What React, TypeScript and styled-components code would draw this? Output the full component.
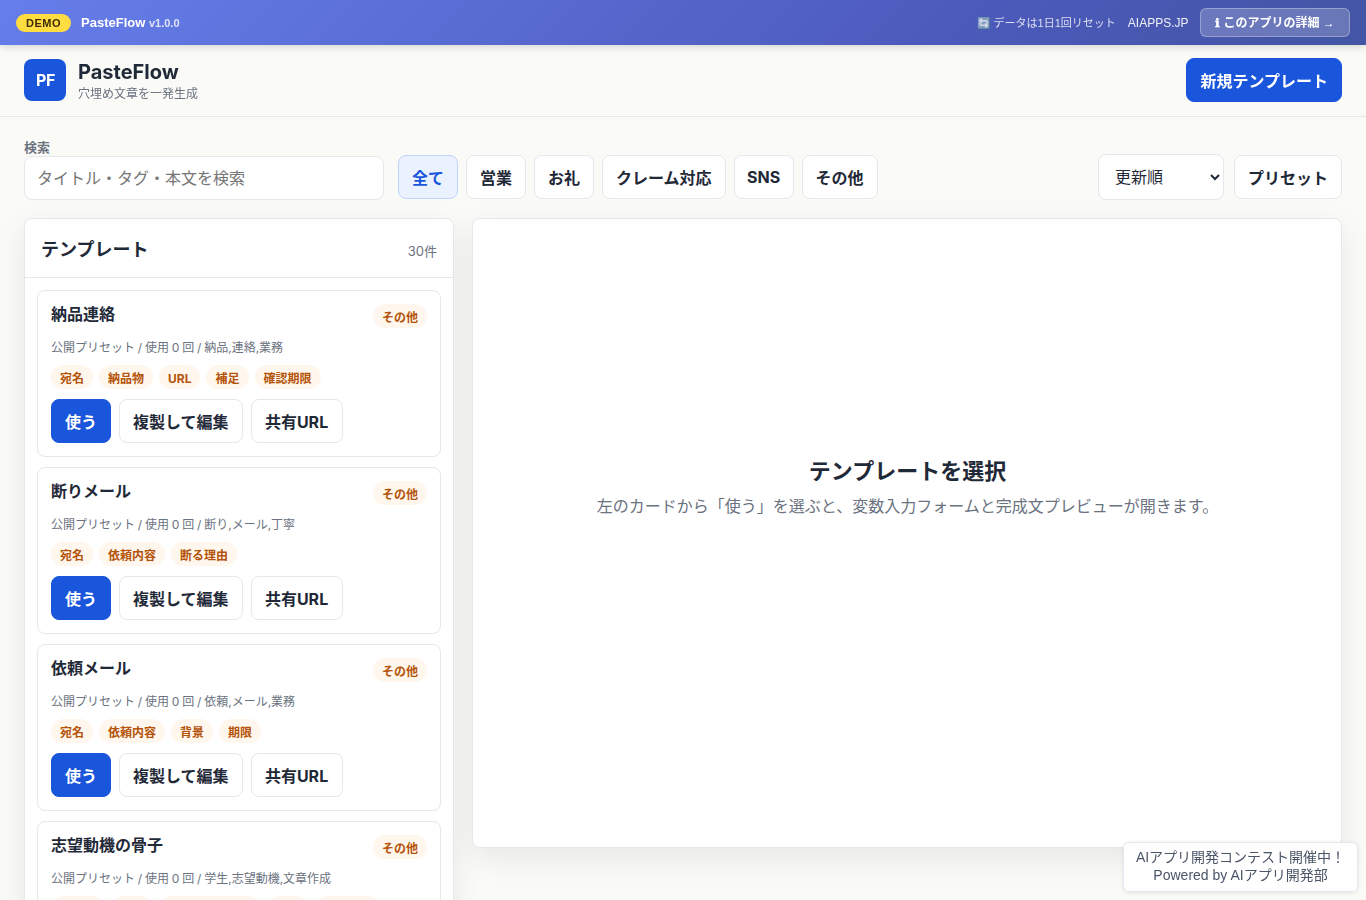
import React from 'react';
import styled, { createGlobalStyle, css } from 'styled-components';

const GlobalStyle = createGlobalStyle`
  * { box-sizing: border-box; }
  body {
    margin: 0;
    background: #fafaf7;
    color: #1f2937;
    font-family: Inter, "Noto Sans CJK JP", sans-serif;
    font-size: 16px;
  }
  h1, h2, h3, p { margin: 0; }
  button, input, select { font: inherit; color: inherit; }
`;

const Page = styled.div`
  height: 900px;
  overflow: hidden;
`;

const DemoBar = styled.div`
  position: relative;
  z-index: 3;
  display: flex;
  align-items: center;
  justify-content: space-between;
  height: 45px;
  padding: 0 16px;
  background: linear-gradient(135deg, #667eea 0%, #4c5abb 70%, #4355a4 100%);
  box-shadow: 0 2px 8px rgba(0, 0, 0, 0.15);
  color: #fff;
  font-family: "Liberation Sans", "Noto Sans CJK JP", sans-serif;
  will-change: transform;
`;

const BarGroup = styled.div<{ $gap: number }>`
  display: flex;
  align-items: center;
  gap: ${(p) => p.$gap}px;
`;

const DemoBadge = styled.span`
  padding: 3px 10px;
  border-radius: 12px;
  background: #ffdd40;
  color: #3d2b0a;
  font-size: 11px;
  font-weight: 700;
  line-height: 12px;
  letter-spacing: 0.5px;
`;

const DemoName = styled.span`
  font-size: 13px;
  font-weight: 700;
  line-height: 15px;

  small {
    font-size: 11px;
    opacity: 0.8;
  }
`;

const ResetNote = styled.span`
  margin-top: -2px;
  font-size: 11px;
  opacity: 0.8;
`;

const SiteLink = styled.span`
  margin-right: -0.5px;
  font-size: 12px;
  opacity: 0.9;
`;

const DetailLink = styled.button`
  width: 150px;
  height: 29px;
  padding: 0;
  border: 1px solid rgba(255, 255, 255, 0.3);
  border-radius: 6px;
  background: rgba(255, 255, 255, 0.2);
  font-size: 12px;
  font-weight: 700;
  line-height: 16px;
`;

const InfoMark = styled.span`
  margin-right: 0.5px;
  font-family: "DejaVu Sans", sans-serif;
  -webkit-text-stroke: 0.5px #fff;
`;

const Header = styled.header`
  position: relative;
  z-index: 2;
  display: flex;
  align-items: flex-start;
  justify-content: space-between;
  height: 72px;
  padding: 13px 24px 0;
  border-bottom: 1px solid #e5e7eb;
  will-change: transform;
`;

const Brand = styled.div`
  display: flex;
  align-items: center;
  gap: 12px;
  height: 44px;
`;

const Logo = styled.div`
  display: grid;
  place-items: center;
  width: 42px;
  height: 42px;
  padding-left: 1px;
  border-radius: 8px;
  background: #1a56db;
  color: #fff;
  font-weight: 700;
  letter-spacing: -0.3px;
`;

const BrandTitle = styled.h1`
  padding-top: 3px;
  font-size: 20px;
  line-height: 24px;
  font-weight: 700;
`;

const BrandSub = styled.p`
  padding-top: 1px;
  color: #6b7280;
  font-size: 12px;
  line-height: 18px;
`;

const Button = styled.button<{ $kind?: 'primary' | 'active'; $width?: number }>`
  width: ${(p) => (p.$width ? `${p.$width}px` : 'auto')};
  height: 44px;
  padding: 0 ${(p) => (p.$width ? 0 : 13)}px;
  border: 1px solid #e5e7eb;
  border-radius: 8px;
  background: #fff;
  font-weight: 700;
  white-space: nowrap;
  ${(p) =>
    p.$kind === 'primary' &&
    css`
      border-color: #1a56db;
      background: #1a56db;
      color: #fff;
    `}
  ${(p) =>
    p.$kind === 'active' &&
    css`
      border-color: #bfd3fe;
      background: #eaf1ff;
      color: #1a56db;
    `}
`;

const Main = styled.main`
  padding: 21px 24px 0;
`;

const Toolbar = styled.div`
  display: flex;
  align-items: flex-end;
  height: 62px;
`;

const SearchField = styled.label`
  display: flex;
  flex-direction: column;
  width: 360px;
  margin-right: 14px;
  color: #6b7280;
  font-size: 13px;
  font-weight: 700;
  line-height: 18px;
`;

const SearchInput = styled.input`
  height: 44px;
  padding: 0 12px;
  border: 1px solid #e5e7eb;
  border-radius: 8px;
  background: #fff;
  font-size: 16px;
  font-weight: 400;
`;

const Filters = styled.div`
  display: flex;
  flex: 1;
  gap: 8px;
  padding-bottom: 1px;
`;

const SortGroup = styled.div`
  display: flex;
  align-items: center;
  gap: 10px;
`;

const SortSelect = styled.select`
  width: 126px;
  height: 46px;
  padding: 0 12px;
  border: 1px solid #e5e7eb;
  border-radius: 8px;
  background: #fff;
`;

const Workspace = styled.div`
  display: grid;
  grid-template-columns: 430px 1fr;
  align-items: start;
  gap: 18px;
  margin-top: 18px;
`;

const Panel = styled.section`
  border: 1px solid #e5e7eb;
  border-radius: 8px;
  background: #fff;
  box-shadow: 0 10px 30px rgba(17, 24, 39, 0.08);
`;

const PanelHead = styled.div`
  display: flex;
  align-items: center;
  justify-content: space-between;
  height: 59px;
  padding: 3px 16px 0;
  border-bottom: 1px solid #e5e7eb;

  h2 { font-size: 18px; line-height: 26px; }
  span { padding-top: 2px; color: #6b7280; font-size: 13px; line-height: 18px; }
`;

const CardList = styled.div`
  display: grid;
  gap: 10px;
  padding: 12px;
`;

const Card = styled.article`
  display: grid;
  gap: 10px;
  padding: 13px;
  border: 1px solid #e5e7eb;
  border-radius: 8px;
`;

const CardTop = styled.div`
  display: flex;
  align-items: flex-start;
  justify-content: space-between;

  h3 { font-size: 16px; line-height: 20px; }
`;

const Meta = styled.p`
  height: 17px;
  color: #6b7280;
  font-size: 12px;
  line-height: 19px;
  word-spacing: -0.55px;
`;

const Chips = styled.div<{ $gap: number }>`
  display: flex;
  gap: ${(p) => p.$gap}px;
`;

const Chip = styled.span`
  height: 24px;
  padding: 0 9px;
  border-radius: 12px;
  background: #fff7ed;
  color: #b45309;
  font-size: 12px;
  font-weight: 700;
  line-height: 27px;
`;

const EmptyPanel = styled(Panel)`
  display: flex;
  flex-direction: column;
  align-items: center;
  height: 630px;
  padding-top: 236px;
  padding-left: 1px;

  h2 { font-size: 22px; line-height: 32px; }
  p { margin-top: 7px; color: #6b7280; line-height: 24px; }
`;

const PromoBadge = styled.aside`
  position: fixed;
  right: 8px;
  bottom: 8px;
  z-index: 4;
  width: 235px;
  height: 50px;
  padding-top: 5px;
  border: 1px solid #e2e8f0;
  border-radius: 6px;
  background: rgba(255, 255, 255, 0.95);
  box-shadow: 0 1px 4px rgba(0, 0, 0, 0.1);
  color: #4a5568;
  font-family: "Liberation Sans", "Noto Sans CJK JP", sans-serif;
  font-size: 14px;
  line-height: 18px;
  text-align: center;
  white-space: nowrap;
  will-change: transform;
`;

const filters = ['全て', '営業', 'お礼', 'クレーム対応', 'SNS', 'その他'];

const templates = [
  { title: '納品連絡', tags: '納品,連絡,業務', fields: ['宛名', '納品物', 'URL', '補足', '確認期限'] },
  { title: '断りメール', tags: '断り,メール,丁寧', fields: ['宛名', '依頼内容', '断る理由'] },
  { title: '依頼メール', tags: '依頼,メール,業務', fields: ['宛名', '依頼内容', '背景', '期限'] },
  { title: '志望動機の骨子', tags: '学生,志望動機,文章作成', fields: ['志望先', '理由', '活かせる経験等', '強み', '将来目標'] },
];

export default function App() {
  return (
    <Page>
      <GlobalStyle />
      <DemoBar>
        <BarGroup $gap={10}>
          <DemoBadge>DEMO</DemoBadge>
          <DemoName>PasteFlow <small>v1.0.0</small></DemoName>
        </BarGroup>
        <BarGroup $gap={12}>
          <ResetNote>🔄 データは1日1回リセット</ResetNote>
          <SiteLink>AIAPPS.JP</SiteLink>
          <DetailLink><InfoMark>ℹ</InfoMark> このアプリの詳細 →</DetailLink>
        </BarGroup>
      </DemoBar>
      <Header>
        <Brand>
          <Logo>PF</Logo>
          <div>
            <BrandTitle>PasteFlow</BrandTitle>
            <BrandSub>穴埋め文章を一発生成</BrandSub>
          </div>
        </Brand>
        <Button $kind="primary">新規テンプレート</Button>
      </Header>
      <Main>
        <Toolbar>
          <SearchField>
            検索
            <SearchInput placeholder="タイトル・タグ・本文を検索" />
          </SearchField>
          <Filters>
            {filters.map((name, i) => (
              <Button
                key={name}
                $kind={i === 0 ? 'active' : undefined}
                $width={name === 'SNS' ? 60 : undefined}
              >
                {name}
              </Button>
            ))}
          </Filters>
          <SortGroup>
            <SortSelect><option>更新順</option></SortSelect>
            <Button>プリセット</Button>
          </SortGroup>
        </Toolbar>
        <Workspace>
          <Panel>
            <PanelHead>
              <h2>テンプレート</h2>
              <span>30件</span>
            </PanelHead>
            <CardList>
              {templates.map((t) => (
                <Card key={t.title}>
                  <CardTop>
                    <h3>{t.title}</h3>
                    <Chip>その他</Chip>
                  </CardTop>
                  <Meta>公開プリセット / 使用 0 回 / {t.tags}</Meta>
                  <Chips $gap={6}>
                    {t.fields.map((f) => <Chip key={f}>{f}</Chip>)}
                  </Chips>
                  <Chips $gap={8}>
                    <Button $kind="primary">使う</Button>
                    <Button>複製して編集</Button>
                    <Button $width={92}>共有URL</Button>
                  </Chips>
                </Card>
              ))}
            </CardList>
          </Panel>
          <EmptyPanel>
            <h2>テンプレートを選択</h2>
            <p>左のカードから「使う」を選ぶと、変数入力フォームと完成文プレビューが開きます。</p>
          </EmptyPanel>
        </Workspace>
      </Main>
      <PromoBadge>
        AIアプリ開発コンテスト開催中！<br />
        Powered by AIアプリ開発部
      </PromoBadge>
    </Page>
  );
}
